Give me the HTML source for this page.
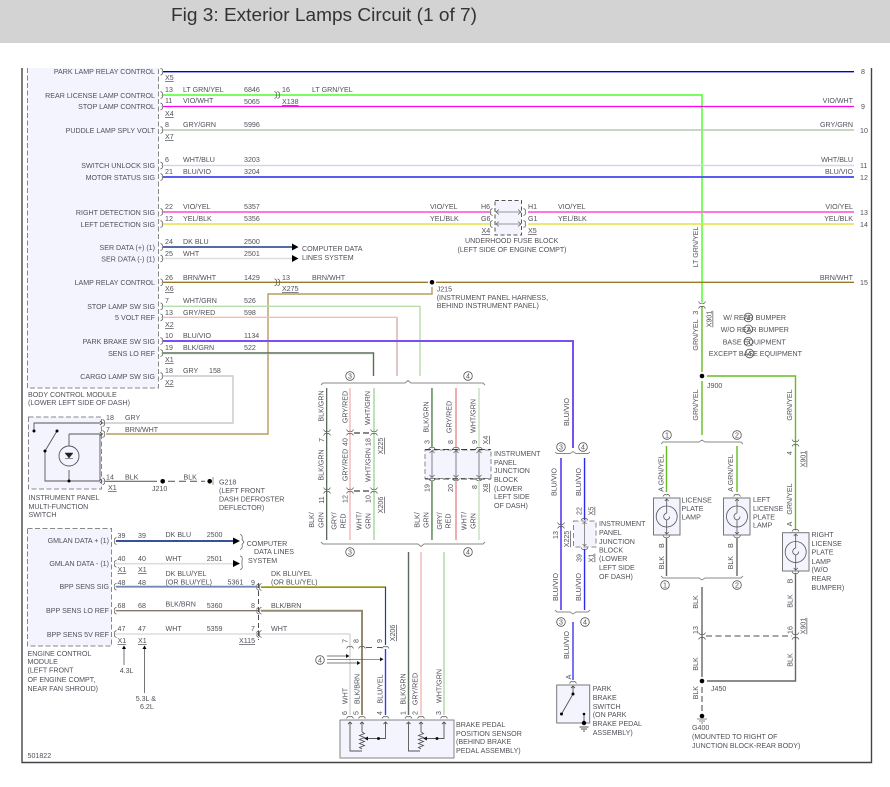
<!DOCTYPE html>
<html><head><meta charset="utf-8"><title>Fig 3: Exterior Lamps Circuit (1 of 7)</title>
<style>
html,body{margin:0;padding:0;background:#fff;width:890px;height:787px;overflow:hidden}
svg{display:block;filter:blur(.3px)}
text{font-family:"Liberation Sans",sans-serif;font-size:7.1px;fill:#50505a}
.e{text-anchor:end}.m{text-anchor:middle}.u{text-decoration:underline}
.w{fill:none}
.conn{fill:none;stroke:#555;stroke-width:.7}
.box{fill:#f4f4fe;stroke:#888;stroke-width:1;stroke-dasharray:5 2.5}
.cir{fill:#fff;stroke:#555;stroke-width:.8}
</style></head><body>
<svg width="890" height="787" viewBox="0 0 890 787" xmlns="http://www.w3.org/2000/svg">
<defs>
<path id="p" d="M-1.5,-3.5 Q2,-2 0,0 Q2,2 -1.5,3.5" class="conn"/>
<path id="l" d="M1.5,-3.5 Q-2,-2 0,0 Q-2,2 1.5,3.5" class="conn"/>
<path id="v" d="M-3.5,1.5 Q-2,-1.5 0,0 Q2,-1.5 3.5,1.5" class="conn"/>
<path id="d" d="M-3.5,-1.5 Q-2,1.5 0,0 Q2,1.5 3.5,-1.5" class="conn"/>
</defs>
<rect x="-2" y="-2" width="894" height="45" fill="#d3d3d3"/>
<text x="171" y="21" textLength="306" lengthAdjust="spacingAndGlyphs" style="font-size:18.5px;fill:#333">Fig 3: Exterior Lamps Circuit (1 of 7)</text>

<!-- frame -->
<path d="M22,68V762.5H871.5V68" fill="none" stroke="#444" stroke-width="1.4"/>

<!-- BCM -->
<path d="M27.5,68V388H158.5V68" class="box"/>
<!-- wires -->
<g class="w">
<path d="M163,71.7H854" stroke="#0000dd" stroke-width="1.4"/>
<path d="M163,95H702V302" stroke="#66ff44" stroke-width="1.7"/>
<path d="M163,106.5H854" stroke="#ff00f0" stroke-width="1.3"/>
<path d="M163,130H854" stroke="#b9c9b0" stroke-width="1.5"/>
<path d="M163,165.5H854" stroke="#d4d4ee" stroke-width="1.6"/>
<path d="M163,177H854" stroke="#5a5af5" stroke-width="2"/>
<path d="M163,212H490M528,212H854" stroke="#ff77dd" stroke-width="2"/>
<path d="M163,224H490M528,224H854" stroke="#e6e040" stroke-width="1.5"/>
<path d="M163,247H292" stroke="#1c3a88" stroke-width="1.6"/>
<path d="M163,258.5H292" stroke="#dddddd" stroke-width="1.6"/>
<path d="M163,282.3H428M436,282.3H854" stroke="#9a7a2a" stroke-width="1.3"/>
<path d="M432,287V294H268V434H106" stroke="#b59d5e" stroke-width="1.4"/>
<path d="M163,306.3H420V376" stroke="#b6dcac" stroke-width="1.4"/>
<path d="M163,317.3H397V376" stroke="#f3bcbc" stroke-width="1.4"/>
<path d="M397,318V376" stroke="#c9a9a9" stroke-width="1"/>
<path d="M163,341H573V448" stroke="#7a50f5" stroke-width="2"/>
<path d="M163,353H373.5V376" stroke="#5e6a5e" stroke-width="1.4"/>
<path d="M163,354H373" stroke="#a8d8a0" stroke-width=".6"/>
<path d="M163,376H233V423H34V434" stroke="#c8c8c8" stroke-width="1.4"/>
<path d="M105,481.3H157" stroke="#666" stroke-width="1.2"/>
<path d="M168,481.3H205" stroke="#666" stroke-width="1.2" stroke-dasharray="7 4"/>
</g>
<path d="M103,423h-3M103,434h-3" stroke="#444"/>
<g fill="#000"><path d="M292,243.500l6.500,3.500-6.500,3.500zM292,255l6.500,3.500-6.500,3.500z"/><circle cx="432" cy="282.300" r="2.300"/><circle cx="162.700" cy="481.300" r="2.300"/><circle cx="209.700" cy="481.300" r="2.300"/></g>
<path d="M213,477v8" stroke="#999"/>

<!-- pin parens BCM -->
<g>
<use href="#p" x="162" y="71.7"/><use href="#p" x="162" y="95"/><use href="#p" x="162" y="106.5"/><use href="#p" x="162" y="130"/>
<use href="#p" x="162" y="165.500"/><use href="#p" x="162" y="177"/><use href="#p" x="162" y="212"/><use href="#p" x="162" y="224"/>
<use href="#p" x="162" y="247"/><use href="#p" x="162" y="258.500"/><use href="#p" x="162" y="282.300"/><use href="#p" x="162" y="306.300"/>
<use href="#p" x="162" y="317.300"/><use href="#p" x="162" y="341"/><use href="#p" x="162" y="353"/><use href="#p" x="162" y="376"/>
<use href="#p" x="276" y="95"/><use href="#p" x="279" y="95"/><use href="#p" x="276" y="282.3"/><use href="#p" x="279" y="282.3"/>
</g>

<!-- BCM labels -->
<g class="e">
<text class="e" x="155" y="74">PARK LAMP RELAY CONTROL</text>
<text class="e" x="155" y="98">REAR LICENSE LAMP CONTROL</text>
<text class="e" x="155" y="109">STOP LAMP CONTROL</text>
<text class="e" x="155" y="133">PUDDLE LAMP SPLY VOLT</text>
<text class="e" x="155" y="168">SWITCH UNLOCK SIG</text>
<text class="e" x="155" y="180">MOTOR STATUS SIG</text>
<text class="e" x="155" y="215">RIGHT DETECTION SIG</text>
<text class="e" x="155" y="227">LEFT DETECTION SIG</text>
<text class="e" x="155" y="250">SER DATA (+) (1)</text>
<text class="e" x="155" y="261.500">SER DATA (-) (1)</text>
<text class="e" x="155" y="285">LAMP RELAY CONTROL</text>
<text class="e" x="155" y="309">STOP LAMP SW SIG</text>
<text class="e" x="155" y="320">5 VOLT REF</text>
<text class="e" x="155" y="344">PARK BRAKE SW SIG</text>
<text class="e" x="155" y="356">SENS LO REF</text>
<text class="e" x="155" y="379">CARGO LAMP SW SIG</text>
</g>
<text x="28" y="397">BODY CONTROL MODULE</text>
<text x="28" y="405">(LOWER LEFT SIDE OF DASH)</text>

<text class="u" x="165" y="80">X5</text>
<text x="165" y="92">13</text><text x="183" y="92">LT GRN/YEL</text><text x="244" y="92">6846</text><text x="282" y="92">16</text><text x="312" y="92">LT GRN/YEL</text>
<text x="165" y="103">11</text><text x="183" y="103">VIO/WHT</text><text x="244" y="104">5065</text><text class="u" x="282" y="104">X138</text>
<text class="u" x="165" y="116">X4</text>
<text x="165" y="127">8</text><text x="183" y="127">GRY/GRN</text><text x="244" y="127">5996</text>
<text class="u" x="165" y="139">X7</text>
<text x="165" y="162">6</text><text x="183" y="162">WHT/BLU</text><text x="244" y="162">3203</text>
<text x="165" y="174">21</text><text x="183" y="174">BLU/VIO</text><text x="244" y="174">3204</text>
<text x="165" y="209">22</text><text x="183" y="209">VIO/YEL</text><text x="244" y="209">5357</text>
<text x="165" y="221">12</text><text x="183" y="221">YEL/BLK</text><text x="244" y="221">5356</text>
<text x="165" y="244">24</text><text x="183" y="244">DK BLU</text><text x="244" y="244">2500</text>
<text x="165" y="256">25</text><text x="183" y="256">WHT</text><text x="244" y="256">2501</text>
<text x="302" y="251">COMPUTER DATA</text><text x="302" y="260">LINES SYSTEM</text>
<text x="165" y="280">26</text><text x="183" y="280">BRN/WHT</text><text x="244" y="280">1429</text><text x="282" y="280">13</text><text x="312" y="280">BRN/WHT</text>
<text class="u" x="165" y="291">X6</text><text class="u" x="282" y="291">X275</text>
<text x="165" y="303">7</text><text x="183" y="303">WHT/GRN</text><text x="244" y="303">526</text>
<text x="165" y="315">13</text><text x="183" y="315">GRY/RED</text><text x="244" y="315">598</text>
<text class="u" x="165" y="327">X2</text>
<text x="165" y="338">10</text><text x="183" y="338">BLU/VIO</text><text x="244" y="338">1134</text>
<text x="165" y="350">19</text><text x="183" y="350">BLK/GRN</text><text x="244" y="350">522</text>
<text class="u" x="165" y="362">X1</text>
<text x="165" y="373">18</text><text x="183" y="373">GRY</text><text x="209" y="373">158</text>
<text class="u" x="165" y="385">X2</text>

<!-- right labels -->
<text class="e" x="853" y="103">VIO/WHT</text><text class="e" x="853" y="127">GRY/GRN</text><text class="e" x="853" y="162">WHT/BLU</text><text class="e" x="853" y="174">BLU/VIO</text><text class="e" x="853" y="209">VIO/YEL</text><text class="e" x="853" y="221">YEL/BLK</text><text class="e" x="853" y="280">BRN/WHT</text>
<text x="861" y="74">8</text><text x="861" y="109">9</text><text x="860" y="133">10</text><text x="860" y="168">11</text><text x="860" y="180">12</text><text x="860" y="215">13</text><text x="860" y="227">14</text><text x="860" y="285">15</text>

<!-- underhood fuse block -->
<rect x="495" y="200.500" width="26.500" height="34.500" class="box" style="stroke:#555;stroke-dasharray:4 2.500"/>
<path d="M496,212H521M496,224H521" stroke="#777" stroke-width=".8"/>
<path d="M499,209.500l-3,2.500 3,2.500M499,221.500l-3,2.500 3,2.500M518,209.500l3,2.500-3,2.500M518,221.500l3,2.500-3,2.500" fill="none" stroke="#555" stroke-width=".6"/>
<use href="#l" x="491" y="212"/><use href="#l" x="491" y="224"/><use href="#p" x="525" y="212"/><use href="#p" x="525" y="224"/>
<text x="430" y="209">VIO/YEL</text><text x="430" y="221">YEL/BLK</text>
<text x="481" y="209">H6</text><text x="481" y="221">G6</text><text class="u" x="481.500" y="233">X4</text>
<text x="528" y="209">H1</text><text x="528" y="221">G1</text><text class="u" x="528" y="233">X5</text>
<text x="558" y="209">VIO/YEL</text><text x="558" y="221">YEL/BLK</text>
<text x="465" y="243">UNDERHOOD FUSE BLOCK</text><text x="457.500" y="252">(LEFT SIDE OF ENGINE COMPT)</text>
<text x="436.700" y="291.500">J215</text><text x="436.700" y="300">(INSTRUMENT PANEL HARNESS,</text><text x="436.700" y="308">BEHIND INSTRUMENT PANEL)</text>

<!-- IP multifunction switch -->
<rect x="28.500" y="417" width="73" height="72" class="box"/>
<g fill="none" stroke="#555" stroke-width=".9">
<path d="M34,431V423H100M69,434H100V480.500M69,434V446M69,470V481M45,451V481H100M45,451L57,431"/>
<circle cx="69" cy="456" r="10"/>
<path d="M100,421l2,2-2,2M100,432l2,2-2,2M100,479l2,2-2,2"/>
</g>
<path d="M65,453h8l-4,5zM65,458.500h8" fill="#222" stroke="#222" stroke-width=".5"/>
<g fill="#000"><circle cx="34" cy="431" r="1.500"/><circle cx="57" cy="431" r="1.500"/><circle cx="45" cy="451" r="1.500"/><circle cx="69" cy="481" r="1.500"/></g>
<use href="#p" x="104" y="423"/><use href="#p" x="104" y="434"/><use href="#p" x="104" y="481.300"/>
<text x="106" y="420">18</text><text x="125" y="420">GRY</text><text x="106" y="432">7</text><text x="125" y="432">BRN/WHT</text>
<text x="106" y="479.500">14</text><text x="125" y="479.500">BLK</text><text class="u" x="108" y="490">X1</text><text x="183.500" y="479.500">BLK</text>
<text x="152" y="491">J210</text>
<text x="219" y="484.500">G218</text><text x="219" y="493">(LEFT FRONT</text><text x="219" y="501.500">DASH DEFROSTER</text><text x="219" y="510">DEFLECTOR)</text>
<text x="28.500" y="500">INSTRUMENT PANEL</text><text x="28.500" y="509">MULTI-FUNCTION</text><text x="28.500" y="517">SWITCH</text>

<!-- ECM -->
<rect x="27.500" y="528.500" width="84" height="117.500" class="box"/>
<g class="w">
<path d="M116,541H234" stroke="#1c3a88" stroke-width="1.700"/>
<path d="M116,563.700H234" stroke="#dddddd" stroke-width="1.700"/>
<path d="M116,586.700H257" stroke="#7587b5" stroke-width="1.800"/>
<path d="M116,610.700H257" stroke="#85786a" stroke-width="1.400"/>
<path d="M116,634H257" stroke="#dddddd" stroke-width="1.600"/>
<path d="M261,587H385.500V645" stroke="#24408a" stroke-width="1.200"/>
<path d="M261,586.400H386" stroke="#e8e040" stroke-width=".7"/>
<path d="M261,610.700H362V715" stroke="#958a70" stroke-width="2"/>
<path d="M261,634H350V715" stroke="#dcdcdc" stroke-width="1.600"/>
<path d="M385.500,649V715" stroke="#3a3af0" stroke-width="1.400"/>
<path d="M408.500,552V715" stroke="#5e6a5e" stroke-width="1.400"/>
<path d="M409.300,552V715" stroke="#a8d8a0" stroke-width=".6"/>
<path d="M421,552V715" stroke="#f3bcbc" stroke-width="1.500"/>
<path d="M444,552V715" stroke="#aadaa0" stroke-width="1.400"/>
</g>
<g fill="#000"><path d="M233,537.500l7,3.500-7,3.500zM233,560l7,3.500-7,3.500z"/></g>
<path d="M240,534.500q3,.5 2,5 l2,2.500-2,2.500 q1,4 -2,5M240,556q3,0 2,5v4q1,4 -2,4.500" fill="none" stroke="#555" stroke-width=".7"/>
<path d="M258.500,583V640" stroke="#222" stroke-width=".8" stroke-dasharray="5 3"/>
<use href="#l" x="115" y="541"/><use href="#l" x="115" y="563.700"/><use href="#l" x="115" y="586.700"/><use href="#l" x="115" y="610.700"/><use href="#l" x="115" y="634"/>
<use href="#l" x="257.500" y="587"/><use href="#l" x="260" y="587"/><use href="#l" x="257.500" y="610.700"/><use href="#l" x="260" y="610.700"/><use href="#l" x="257.500" y="634"/><use href="#l" x="260" y="634"/>
<text class="e" x="109" y="543">GMLAN DATA + (1)</text><text class="e" x="109" y="566">GMLAN DATA - (1)</text><text class="e" x="109" y="589">BPP SENS SIG</text><text class="e" x="109" y="613">BPP SENS LO REF</text><text class="e" x="109" y="637">BPP SENS 5V REF</text>
<text x="117.500" y="538">39</text><text x="138" y="538">39</text><text x="165.500" y="537">DK BLU</text><text x="206.700" y="537">2500</text>
<text x="117.500" y="561">40</text><text x="138" y="561">40</text><text x="165.500" y="561">WHT</text><text x="206.700" y="561">2501</text>
<text class="u" x="117.500" y="572">X1</text><text class="u" x="138" y="572">X1</text>
<text x="117.500" y="585">48</text><text x="138" y="585">48</text><text x="165.500" y="576">DK BLU/YEL</text><text x="165.500" y="584.500">(OR BLU/YEL)</text><text x="227.500" y="584.500">5361</text><text x="251" y="585">9</text>
<text x="117.500" y="608">68</text><text x="138" y="608">68</text><text x="165.500" y="606.500">BLK/BRN</text><text x="206.700" y="608">5360</text><text x="251" y="608">8</text>
<text x="117.500" y="631">47</text><text x="138" y="631">47</text><text x="165.500" y="631">WHT</text><text x="206.700" y="631">5359</text><text x="251" y="631">7</text>
<text class="u" x="117.500" y="643">X1</text><text class="u" x="138" y="643">X1</text><text class="u" x="239" y="643">X115</text>
<text x="271" y="576">DK BLU/YEL</text><text x="271" y="584.500">(OR BLU/YEL)</text><text x="271" y="608">BLK/BRN</text><text x="271" y="631">WHT</text>
<text x="246.700" y="546">COMPUTER</text><text x="254" y="554">DATA LINES</text><text x="248" y="563">SYSTEM</text>
<text x="27.500" y="656">ENGINE CONTROL</text><text x="27.500" y="664">MODULE</text><text x="27.500" y="672.500">(LEFT FRONT</text><text x="27.500" y="681.800">OF ENGINE COMPT,</text><text x="27.500" y="691">NEAR FAN SHROUD)</text>
<text x="27.500" y="758">501822</text>
<text x="119.700" y="673">4.3L</text><text x="135.700" y="701">5.3L &amp;</text><text x="140" y="709">6.2L</text>
<path d="M124,665V648M144.500,693V648" stroke="#666" stroke-width=".9"/><path d="M122,649l2-3.500 2,3.500zM142.500,649l2-3.500 2,3.500z" fill="#000"/>

<!-- junction groups -->
<path d="M321,385l2-2H405l3-2.500 3,2.500H483l2,2" fill="none" stroke="#888" stroke-width="1"/>
<circle cx="350" cy="376" r="4.300" class="cir"/><text class="m" x="350" y="378.500">3</text>
<circle cx="468" cy="376" r="4.300" class="cir"/><text class="m" x="468" y="378.500">4</text>
<g class="w">
<path d="M326.700,388V540" stroke="#5e6a5e" stroke-width="1.400"/><path d="M327.400,388V540" stroke="#a8d8a0" stroke-width=".6"/>
<path d="M350,388V540" stroke="#f3bcbc" stroke-width="1.500"/>
<path d="M374,388V540" stroke="#aadaa0" stroke-width="1.500"/>
</g>
<path d="M354,433H370M354,491H370" stroke="#111" stroke-width=".9" stroke-dasharray="6 3"/>
<use href="#d" x="327" y="431"/><use href="#v" x="327" y="434"/><use href="#d" x="350" y="431"/><use href="#v" x="350" y="434"/><use href="#d" x="374" y="431"/><use href="#v" x="374" y="434"/>
<use href="#d" x="327" y="489"/><use href="#v" x="327" y="492"/><use href="#d" x="350" y="489"/><use href="#v" x="350" y="492"/><use href="#d" x="374" y="489"/><use href="#v" x="374" y="492"/>
<rect x="425" y="450" width="66" height="28.500" class="box"/>
<path d="M425,449.500H491M425,479H491" stroke="#111" stroke-width=".8" stroke-dasharray="6 3" fill="none"/>
<g class="w">
<path d="M432,388V447M432,481V540" stroke="#5e6a5e" stroke-width="1.400"/><path d="M432.700,388V447M432.700,481V540" stroke="#a8d8a0" stroke-width=".6"/>
<path d="M456,388V447M456,481V540" stroke="#f08f8f" stroke-width="1.500"/>
<path d="M479,388V447M479,481V540" stroke="#c8e0c0" stroke-width="1.500"/>
<path d="M432,451V477M456,451V477M479,451V477" stroke="#666" stroke-width=".8"/>
<path d="M429.500,453l2.500-2.500 2.500,2.500M453.500,453l2.500-2.500 2.500,2.500M476.500,453l2.500-2.500 2.500,2.500M429.500,475l2.500,2.500 2.500-2.500M453.500,475l2.500,2.500 2.500-2.500M476.500,475l2.500,2.500 2.500-2.500" stroke="#555" stroke-width=".7"/>
</g>
<use href="#v" x="432" y="448"/><use href="#v" x="456" y="448"/><use href="#v" x="479" y="448"/><use href="#d" x="432" y="480"/><use href="#d" x="456" y="480"/><use href="#d" x="479" y="480"/>
<path d="M321,542l2,2H418l3,2.500 3-2.500H483l2-2" fill="none" stroke="#888" stroke-width="1"/>
<circle cx="350" cy="552" r="4.300" class="cir"/><text class="m" x="350" y="554.500">3</text>
<circle cx="468" cy="552" r="4.300" class="cir"/><text class="m" x="468" y="554.500">4</text>

<g class="m">
<text class="m" transform="translate(323.500,406) rotate(-90)">BLK/GRN</text>
<text class="m" transform="translate(347.500,407) rotate(-90)">GRY/RED</text>
<text class="m" transform="translate(370,408) rotate(-90)">WHT/GRN</text>
<text class="m" transform="translate(324,440) rotate(-90)">7</text>
<text class="m" transform="translate(347.500,442) rotate(-90)">40</text>
<text class="m" transform="translate(370.500,442) rotate(-90)">18</text>
<text class="m u" transform="translate(383,446) rotate(-90)">X225</text>
<text class="m" transform="translate(323.500,465) rotate(-90)">BLK/GRN</text>
<text class="m" transform="translate(347.500,465) rotate(-90)">GRY/RED</text>
<text class="m" transform="translate(370.500,465) rotate(-90)">WHT/GRN</text>
<text class="m" transform="translate(324,500) rotate(-90)">11</text>
<text class="m" transform="translate(347.500,499) rotate(-90)">12</text>
<text class="m" transform="translate(370.500,499) rotate(-90)">10</text>
<text class="m u" transform="translate(383,505) rotate(-90)">X206</text>
<text class="m" transform="translate(314,520) rotate(-90)">BLK/</text>
<text class="m" transform="translate(323.500,520) rotate(-90)">GRN</text>
<text class="m" transform="translate(336.500,521) rotate(-90)">GRY/</text>
<text class="m" transform="translate(345.500,521) rotate(-90)">RED</text>
<text class="m" transform="translate(361.500,521) rotate(-90)">WHT/</text>
<text class="m" transform="translate(370.500,521) rotate(-90)">GRN</text>
<text class="m" transform="translate(428.500,417) rotate(-90)">BLK/GRN</text>
<text class="m" transform="translate(451.500,417) rotate(-90)">GRY/RED</text>
<text class="m" transform="translate(475.500,416) rotate(-90)">WHT/GRN</text>
<text class="m" transform="translate(429.500,442) rotate(-90)">3</text>
<text class="m" transform="translate(453,442) rotate(-90)">8</text>
<text class="m" transform="translate(477,442) rotate(-90)">9</text>
<text class="m u" transform="translate(488,440) rotate(-90)">X4</text>
<text class="m" transform="translate(429.500,488) rotate(-90)">19</text>
<text class="m" transform="translate(453,488) rotate(-90)">20</text>
<text class="m" transform="translate(477,487) rotate(-90)">8</text>
<text class="m u" transform="translate(488,488) rotate(-90)">X8</text>
<text class="m" transform="translate(419.500,520) rotate(-90)">BLK/</text>
<text class="m" transform="translate(428.500,520) rotate(-90)">GRN</text>
<text class="m" transform="translate(442,521) rotate(-90)">GRY/</text>
<text class="m" transform="translate(450.500,521) rotate(-90)">RED</text>
<text class="m" transform="translate(466.500,521) rotate(-90)">WHT/</text>
<text class="m" transform="translate(475.500,521) rotate(-90)">GRN</text>
</g>
<text x="494" y="456">INSTRUMENT</text><text x="494" y="465">PANEL</text><text x="494" y="473">JUNCTION</text><text x="494" y="482">BLOCK</text><text x="494" y="491">(LOWER</text><text x="494" y="499">LEFT SIDE</text><text x="494" y="508">OF DASH)</text>

<!-- brake pedal sensor -->
<use href="#v" x="350" y="647"/><use href="#v" x="362" y="647"/><use href="#v" x="385.500" y="647"/>
<path d="M366,647.500H372M377,647.500H382" stroke="#222" stroke-width=".8"/>
<text class="m" transform="translate(347.500,641) rotate(-90)">7</text><text class="m" transform="translate(358.500,641) rotate(-90)">8</text><text class="m" transform="translate(382,641) rotate(-90)">9</text>
<text class="m u" transform="translate(395,633) rotate(-90)">X206</text>
<circle cx="320" cy="660" r="4.300" class="cir"/><text class="m" x="320" y="662.500">4</text>
<path d="M327,656H347M327,659.300H381M327,663H358" stroke="#555" stroke-width=".7"/>
<path d="M346,654l3.500,2-3.500,2zM380,657.300l3.500,2-3.500,2zM357,661l3.500,2-3.500,2z" fill="#111"/>
<text class="m" transform="translate(347.500,696) rotate(-90)">WHT</text>
<text class="m" transform="translate(359.500,689) rotate(-90)">BLK/BRN</text>
<text class="m" transform="translate(382.500,689) rotate(-90)">BLU/YEL</text>
<text class="m" transform="translate(405.500,689) rotate(-90)">BLK/GRN</text>
<text class="m" transform="translate(417.500,689) rotate(-90)">GRY/RED</text>
<text class="m" transform="translate(441.500,686) rotate(-90)">WHT/GRN</text>
<text class="m" transform="translate(347,713) rotate(-90)">6</text><text class="m" transform="translate(358.500,713) rotate(-90)">5</text><text class="m" transform="translate(382,713) rotate(-90)">4</text><text class="m" transform="translate(405.500,713) rotate(-90)">1</text><text class="m" transform="translate(417.500,713) rotate(-90)">2</text><text class="m" transform="translate(441,713) rotate(-90)">3</text>
<use href="#v" x="350" y="717"/><use href="#v" x="362" y="717"/><use href="#v" x="385.500" y="717"/><use href="#v" x="408.500" y="717"/><use href="#v" x="421" y="717"/><use href="#v" x="444" y="717"/>
<rect x="340" y="720" width="114" height="38" fill="#f4f4fe" stroke="#666" stroke-width=".8"/>
<path d="M340,720.500V758" stroke="#aaa" stroke-width="1.500"/>
<g fill="none" stroke="#555" stroke-width=".9">
<path d="M350,722V751H362M362,722V732M385.500,722V738.500H366"/>
<path d="M408.500,722V751H420M421,722V732M444,722V738.500H425"/>
<path d="M362,732l2.500,1.500-5,2 5,2-5,2 5,2-5,2 5,2-5,2 2.500,1.500M421,732l2.500,1.500-5,2 5,2-5,2 5,2-5,2 5,2-5,2 2.500,1.500"/>
<path d="M348,724l2-2 2,2M360,724l2-2 2,2M383.500,724l2-2 2,2M406.500,724l2-2 2,2M419,724l2-2 2,2M442,724l2-2 2,2"/>
</g>
<path d="M368,736.500l-4,2 4,2zM427,736.500l-4,2 4,2z" fill="#111"/><circle cx="378.500" cy="738.500" r="1.500" fill="#111"/><circle cx="437" cy="738.500" r="1.500" fill="#111"/>
<text x="456" y="727">BRAKE PEDAL</text><text x="456" y="736">POSITION SENSOR</text><text x="456" y="744">(BEHIND BRAKE</text><text x="456" y="753">PEDAL ASSEMBLY)</text>

<!-- park brake -->
<text class="m" transform="translate(569,412) rotate(-90)">BLU/VIO</text>
<path d="M555,452l2,1.500H570l3-2 3,2H588l2-1.500" fill="none" stroke="#888" stroke-width=".9"/>
<circle cx="561" cy="447" r="4.300" class="cir"/><text class="m" x="561" y="449.500">3</text>
<circle cx="583" cy="447" r="4.300" class="cir"/><text class="m" x="583" y="449.500">4</text>
<g class="w">
<path d="M561,458V610" stroke="#7a60f5" stroke-width="2"/>
<path d="M584.500,458V520M584.500,549V610" stroke="#2a2aee" stroke-width="1.300"/>
<path d="M585.300,458V520M585.300,549V610" stroke="#ff70e0" stroke-width=".5"/>
<path d="M573,622V680" stroke="#3a3af0" stroke-width="1.400"/>
</g>
<use href="#d" x="561" y="524"/><use href="#v" x="561" y="527"/>
<rect x="573.500" y="521" width="22.500" height="26" class="box" style="stroke-dasharray:5 3"/>
<path d="M584.500,522V546M582.500,524l2-2 2,2M582.500,544l2,2 2-2" fill="none" stroke="#666" stroke-width=".7"/>
<use href="#v" x="584.500" y="519"/><use href="#d" x="584.500" y="549"/>
<path d="M555,610l2,2H570l3,2 3-2H588l2-2" fill="none" stroke="#888" stroke-width=".9"/>
<circle cx="561" cy="622" r="4.300" class="cir"/><text class="m" x="561" y="624.500">3</text>
<circle cx="585" cy="622" r="4.300" class="cir"/><text class="m" x="585" y="624.500">4</text>
<text class="m" transform="translate(556.500,482) rotate(-90)">BLU/VIO</text>
<text class="m" transform="translate(581,482) rotate(-90)">BLU/VIO</text>
<text class="m" transform="translate(558,587) rotate(-90)">BLU/VIO</text>
<text class="m" transform="translate(581,587) rotate(-90)">BLU/VIO</text>
<text class="m" transform="translate(569,645) rotate(-90)">BLU/VIO</text>
<text class="m" transform="translate(558,535) rotate(-90)">13</text>
<text class="m u" transform="translate(569,539) rotate(-90)">X225</text>
<text class="m" transform="translate(581.500,511) rotate(-90)">22</text>
<text class="m u" transform="translate(593.500,511) rotate(-90)">X5</text>
<text class="m" transform="translate(581.500,558) rotate(-90)">39</text>
<text class="m u" transform="translate(593.500,558) rotate(-90)">X1</text>
<text class="m" transform="translate(571,677) rotate(-90)">A</text>
<text x="599" y="526">INSTRUMENT</text><text x="599" y="535">PANEL</text><text x="599" y="544">JUNCTION</text><text x="599" y="552.500">BLOCK</text><text x="599" y="561">(LOWER</text><text x="599" y="570">LEFT SIDE</text><text x="599" y="579">OF DASH)</text>
<use href="#v" x="573" y="682"/>
<rect x="556.700" y="685" width="33" height="38" fill="#f4f4fe" stroke="#777" stroke-width="1"/>
<g fill="none" stroke="#555" stroke-width=".9"><path d="M573,686V694L561.500,714M584,714V725M579.500,727h9M581,729h6M583,731h2"/><path d="M571,688l2-2 2,2"/></g>
<g fill="#000"><circle cx="573" cy="694" r="1.500"/><circle cx="561.500" cy="714" r="1.500"/><circle cx="584" cy="714" r="1.300"/><circle cx="584" cy="723" r="2.200"/></g>
<text x="592.700" y="691">PARK</text><text x="592.700" y="700">BRAKE</text><text x="592.700" y="709">SWITCH</text><text x="592.700" y="717">(ON PARK</text><text x="592.700" y="726">BRAKE PEDAL</text><text x="592.700" y="735">ASSEMBLY)</text>

<!-- right side -->
<g class="w">
<path d="M702,306V372M702,381V435M707,376H795.500V530" stroke="#66bb22" stroke-width="1.400"/>
<path d="M666.500,446V492M737,446V492" stroke="#66bb22" stroke-width="1.400"/>
<path d="M666.500,538V576M737,538V576" stroke="#666" stroke-width="1.400"/>
<path d="M702,587V677M707,681H795.500V573" stroke="#666" stroke-width="1.400"/>
<path d="M706,636H792" stroke="#888" stroke-width="1.600" stroke-dasharray="6 3.500"/>
<path d="M702,687V715" stroke="#555" stroke-width="1.100" stroke-dasharray="6 3"/>
</g>
<use href="#d" x="702" y="303"/><use href="#v" x="702" y="307"/>
<circle cx="702" cy="376" r="2.300" fill="#000"/><circle cx="702" cy="681" r="2.300" fill="#000"/><circle cx="702" cy="716" r="2.300" fill="#000"/>
<path d="M697,719h10M699,721h6M701,723h2" stroke="#666" stroke-width=".7"/>
<text class="m" transform="translate(698,247) rotate(-90)">LT GRN/YEL</text>
<text class="m" transform="translate(698,335) rotate(-90)">GRN/YEL</text>
<text class="m" transform="translate(698,312.700) rotate(-90)">3</text>
<text class="m u" transform="translate(711.500,319) rotate(-90)">X901</text>
<text x="723.300" y="320">W/ REAR BUMPER</text><text x="720.700" y="332">W/O REAR BUMPER</text><text x="722.700" y="344.500">BASE EQUIPMENT</text><text x="708.700" y="356">EXCEPT BASE EQUIPMENT</text>
<g fill="none" stroke="#555" stroke-width=".8"><circle cx="748.300" cy="317.500" r="4.300"/><circle cx="748.300" cy="329.300" r="4.300"/><circle cx="748.300" cy="341.700" r="4.300"/><circle cx="749.500" cy="353.500" r="4.300"/></g>
<text class="m" x="748.300" y="320">1</text><text class="m" x="748.300" y="331.800">2</text><text class="m" x="748.300" y="344.200">3</text><text class="m" x="749.500" y="356">4</text>
<text x="707" y="388">J900</text>
<text class="m" transform="translate(698,405) rotate(-90)">GRN/YEL</text>
<text class="m" transform="translate(792,405) rotate(-90)">GRN/YEL</text>
<text class="m" transform="translate(792,453) rotate(-90)">4</text>
<text class="m u" transform="translate(805.500,459) rotate(-90)">X901</text>
<use href="#d" x="795.500" y="441"/><use href="#v" x="795.500" y="445"/>
<text class="m" transform="translate(792,499) rotate(-90)">GRN/YEL</text>
<text class="m" transform="translate(792,524) rotate(-90)">A</text>
<path d="M661,444l2-2H699l3-2 3,2H741l2,2" fill="none" stroke="#888" stroke-width=".9"/>
<circle cx="667" cy="435" r="4.300" class="cir"/><text class="m" x="667" y="437.500">1</text>
<circle cx="737" cy="435" r="4.300" class="cir"/><text class="m" x="737" y="437.500">2</text>
<text class="m" transform="translate(663.500,473) rotate(-90)">A GRN/YEL</text>
<text class="m" transform="translate(733,473) rotate(-90)">A GRN/YEL</text>
<use href="#v" x="666.500" y="495"/><use href="#v" x="737" y="495"/><use href="#v" x="795.500" y="530"/>
<g>
<rect x="653.500" y="498" width="26.500" height="37" fill="#f4f4fe" stroke="#777"/>
<rect x="723.500" y="498" width="26.500" height="37" fill="#f4f4fe" stroke="#777"/>
<rect x="782.500" y="532.700" width="26.500" height="38.300" fill="#f4f4fe" stroke="#777"/>
<g fill="none" stroke="#555" stroke-width=".8">
<circle cx="666.700" cy="516.500" r="10.500"/><circle cx="737" cy="516.500" r="10.500"/><circle cx="795.700" cy="552" r="10.500"/>
<path d="M666.700,499V513q-3,1-3,3.500t3,3.500q3-1 3-3.500M666.700,520V534M664.700,501l2-2 2,2M664.700,532l2,2 2-2"/>
<path d="M737,499V513q-3,1-3,3.500t3,3.500q3-1 3-3.500M737,520V534M735,501l2-2 2,2M735,532l2,2 2-2"/>
<path d="M795.700,534V548q-3,1-3,3.500t3,3.500q3-1 3-3.500M795.700,555V570M793.700,536l2-2 2,2M793.700,568l2,2 2-2"/>
</g>
</g>
<use href="#d" x="666.500" y="537"/><use href="#d" x="737" y="537"/><use href="#d" x="795.500" y="573"/>
<text x="681.500" y="502.500">LICENSE</text><text x="681.500" y="511">PLATE</text><text x="681.500" y="519.500">LAMP</text>
<text x="753" y="502">LEFT</text><text x="753" y="510.800">LICENSE</text><text x="753" y="519.500">PLATE</text><text x="753" y="527.500">LAMP</text>
<text x="811.500" y="537">RIGHT</text><text x="811.500" y="546">LICENSE</text><text x="811.500" y="554.500">PLATE</text><text x="811.500" y="564">LAMP</text><text x="811.500" y="572">(W/O</text><text x="811.500" y="581">REAR</text><text x="811.500" y="590">BUMPER)</text>
<text class="m" transform="translate(664,545.700) rotate(-90)">B</text><text class="m" transform="translate(664,562.700) rotate(-90)">BLK</text>
<text class="m" transform="translate(733,545.700) rotate(-90)">B</text><text class="m" transform="translate(733,562.700) rotate(-90)">BLK</text>
<text class="m" transform="translate(792.500,581) rotate(-90)">B</text><text class="m" transform="translate(792.500,601) rotate(-90)">BLK</text>
<path d="M661,576l2,2H699l3,2 3-2H741l2-2" fill="none" stroke="#888" stroke-width=".9"/>
<circle cx="665" cy="585" r="4.300" class="cir"/><text class="m" x="665" y="587.500">1</text>
<circle cx="737" cy="585" r="4.300" class="cir"/><text class="m" x="737" y="587.500">2</text>
<text class="m" transform="translate(698,602) rotate(-90)">BLK</text>
<text class="m" transform="translate(698,630) rotate(-90)">13</text><text class="m" transform="translate(792.500,630) rotate(-90)">16</text>
<text class="m u" transform="translate(805.500,626) rotate(-90)">X901</text>
<use href="#d" x="702" y="634"/><use href="#v" x="702" y="638"/><use href="#d" x="795.500" y="634"/><use href="#v" x="795.500" y="638"/>
<text class="m" transform="translate(698,664) rotate(-90)">BLK</text><text class="m" transform="translate(792.500,660) rotate(-90)">BLK</text><text class="m" transform="translate(698,692.700) rotate(-90)">BLK</text>
<text x="711" y="691">J450</text>
<text x="692" y="730">G400</text><text x="692" y="739">(MOUNTED TO RIGHT OF</text><text x="692" y="748">JUNCTION BLOCK-REAR BODY)</text>
</svg>
</body></html>
